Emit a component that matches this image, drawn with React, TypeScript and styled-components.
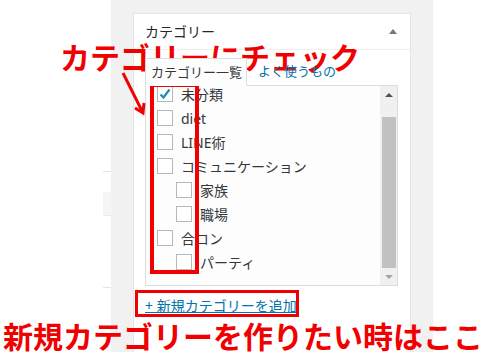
import React from "react";
import styled, { createGlobalStyle } from "styled-components";

const RED = "#f00000";
const WP_BLUE = "#0073aa";
const TEXT_DARK = "#32373c";

const GlobalStyle = createGlobalStyle`
  html, body {
    margin: 0;
    padding: 0;
    background: #fff;
  }
  body {
    font-family: "Noto Sans", "Noto Sans CJK JP", sans-serif;
  }
`;

const Page = styled.div`
  position: relative;
  width: 489px;
  height: 352px;
  display: flex;
  overflow: hidden;
  background: #fff;
`;

const LeftColumn = styled.div`
  width: 111px;
  flex-shrink: 0;
  padding: 171px 0 0 103px;
  box-sizing: border-box;
`;

const EdgeStub = styled.div`
  width: 8px;
  height: 117px;
  box-sizing: border-box;
  border-top: 1px solid #e2e2e2;
  border-bottom: 1px solid #e2e2e2;
`;

const EdgeStubRow = styled.div`
  margin-top: 20px;
  height: 23px;
  background: #f5f5f5;
  border-bottom: 1px solid #e8e8e8;
`;

const GrayColumn = styled.div`
  width: 322px;
  flex-shrink: 0;
  background: #f1f1f1;
  padding: 13px 22px 0;
  box-sizing: border-box;
`;

const RightColumn = styled.div`
  flex: 1;
  background: #fff;
`;

const Panel = styled.div`
  height: 100%;
  background: #fff;
  border: 1px solid #e5e5e5;
  border-bottom: none;
  box-sizing: border-box;
`;

const PanelHeader = styled.div`
  height: 36px;
  box-sizing: border-box;
  border-bottom: 1px solid #eee;
  display: flex;
  align-items: center;
  justify-content: space-between;
  padding: 0 13px 1px 11px;
  font-size: 14px;
  color: #23282d;
`;

const Caret = styled.span`
  width: 0;
  height: 0;
  border-left: 4px solid transparent;
  border-right: 4px solid transparent;
  border-bottom: 5px solid #72777c;
`;

const PanelBody = styled.div`
  padding: 8px 12px 0 11px;
`;

const Tabs = styled.div`
  display: flex;
  align-items: flex-end;
  height: 27px;
  font-size: 13px;
`;

const Tab = styled.div<{ $active?: boolean }>`
  position: relative;
  z-index: 1;
  height: 28px;
  line-height: 26px;
  box-sizing: border-box;
  margin-bottom: -1px;
  white-space: nowrap;
  ${({ $active }) =>
    $active
      ? `
    padding: 0 4px 0 5px;
    border: 1px solid #ddd;
    border-bottom-color: #fdfdfd;
    background: #fdfdfd;
    color: ${TEXT_DARK};
  `
      : `
    padding: 0 0 0 11px;
    color: ${WP_BLUE};
  `}
`;

const ListBox = styled.div`
  width: 253px;
  height: 201px;
  box-sizing: border-box;
  border: 1px solid #ddd;
  background: #fdfdfd;
  display: flex;
  overflow: hidden;
`;

const CheckList = styled.ul`
  flex: 1;
  list-style: none;
  margin: -4px 0 0;
  padding: 0 0 0 11px;
`;

const Row = styled.li<{ $depth: number }>`
  height: 24px;
  display: flex;
  align-items: center;
  padding-left: ${({ $depth }) => $depth * 19}px;
  font-size: 14px;
  color: ${TEXT_DARK};
  white-space: nowrap;
`;

const Box = styled.span`
  width: 16px;
  height: 16px;
  box-sizing: border-box;
  border: 1px solid #b4b9be;
  background: #fff;
  margin-right: 8px;
  flex-shrink: 0;
  display: flex;
`;

const ScrollBar = styled.div`
  width: 17px;
  background: #f0f0f0;
  display: flex;
  flex-direction: column;
`;

const ScrollButton = styled.div<{ $down?: boolean }>`
  height: 17px;
  display: flex;
  align-items: center;
  justify-content: center;
  &::after {
    content: "";
    border-left: 4px solid transparent;
    border-right: 4px solid transparent;
    ${({ $down }) =>
      $down
        ? "border-top: 4px solid #a3a3a3;"
        : "border-bottom: 4px solid #505050;"}
  }
`;

const ScrollTrack = styled.div`
  flex: 1;
  padding: 14px 1px 0 2px;
`;

const ScrollThumb = styled.div`
  height: 151px;
  background: #c1c1c1;
`;

const AddLink = styled.a`
  display: inline-block;
  margin-top: 10px;
  font-size: 14px;
  line-height: 20px;
  color: ${WP_BLUE};
  text-decoration: underline;
`;

const Caption = styled.div`
  position: absolute;
  font-family: "Noto Sans CJK JP", sans-serif;
  font-weight: 700;
  font-size: 30px;
  line-height: 34px;
  color: ${RED};
  white-space: nowrap;
`;

const TopCaption = styled(Caption)`
  left: 60px;
  top: 39px;
`;

const BottomCaption = styled(Caption)`
  left: 3px;
  top: 318px;
`;

const RedFrame = styled.div<{ $w: number }>`
  position: absolute;
  box-sizing: border-box;
  border: ${({ $w }) => $w}px solid ${RED};
`;

const CheckFrame = styled(RedFrame)`
  left: 150px;
  top: 83px;
  width: 49px;
  height: 191px;
`;

const LinkFrame = styled(RedFrame)`
  left: 135px;
  top: 290px;
  width: 164px;
  height: 27px;
`;

const ArrowSvg = styled.svg`
  position: absolute;
  left: 115px;
  top: 68px;
`;

const categories = [
  { name: "未分類", depth: 0, checked: true },
  { name: "diet", depth: 0 },
  { name: "LINE術", depth: 0 },
  { name: "コミュニケーション", depth: 0 },
  { name: "家族", depth: 1 },
  { name: "職場", depth: 1 },
  { name: "合コン", depth: 0 },
  { name: "パーティ", depth: 1 },
];

const Checkbox = ({ checked }: { checked?: boolean }) => (
  <Box>
    {checked && (
      <svg width="14" height="14" viewBox="0 0 14 14">
        <path
          d="M2.5 7.5 L5.5 10.5 L11.5 2.5"
          fill="none"
          stroke="#1e8cbe"
          strokeWidth="2.2"
        />
      </svg>
    )}
  </Box>
);

export default function App() {
  return (
    <>
      <GlobalStyle />
      <Page>
        <LeftColumn>
          <EdgeStub>
            <EdgeStubRow />
          </EdgeStub>
        </LeftColumn>
        <GrayColumn>
          <Panel>
            <PanelHeader>
              <span>カテゴリー</span>
              <Caret />
            </PanelHeader>
            <PanelBody>
              <Tabs>
                <Tab $active>カテゴリー一覧</Tab>
                <Tab>よく使うもの</Tab>
              </Tabs>
              <ListBox>
                <CheckList>
                  {categories.map((c) => (
                    <Row key={c.name} $depth={c.depth}>
                      <Checkbox checked={c.checked} />
                      {c.name}
                    </Row>
                  ))}
                </CheckList>
                <ScrollBar>
                  <ScrollButton />
                  <ScrollTrack>
                    <ScrollThumb />
                  </ScrollTrack>
                  <ScrollButton $down />
                </ScrollBar>
              </ListBox>
              <AddLink href="#">+ 新規カテゴリーを追加</AddLink>
            </PanelBody>
          </Panel>
        </GrayColumn>
        <RightColumn />

        <TopCaption>カテゴリーにチェック</TopCaption>
        <ArrowSvg width="40" height="50" viewBox="0 0 40 50">
          <line x1="8" y1="5" x2="27" y2="43" stroke={RED} strokeWidth="3" />
          <path d="M20 40 L28 45 L29 35" fill="none" stroke={RED} strokeWidth="3" />
        </ArrowSvg>
        <CheckFrame $w={4} />
        <LinkFrame $w={3} />
        <BottomCaption>新規カテゴリーを作りたい時はここ</BottomCaption>
      </Page>
    </>
  );
}
